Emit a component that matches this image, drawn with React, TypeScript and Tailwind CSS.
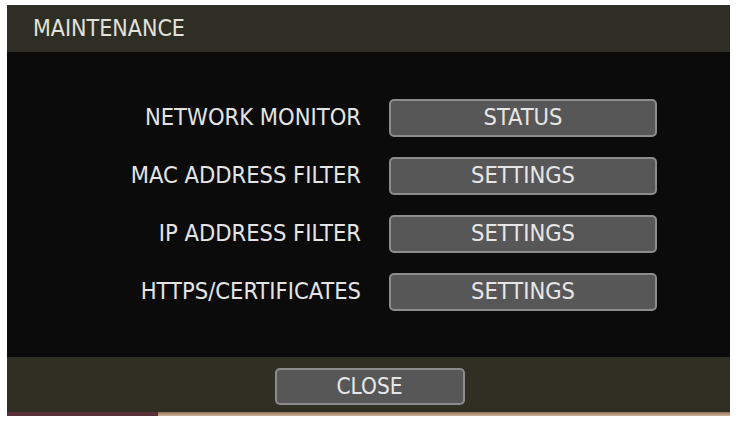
import React from 'react';

const rows = [
    { label: 'NETWORK MONITOR', action: 'STATUS' },
    { label: 'MAC ADDRESS FILTER', action: 'SETTINGS' },
    { label: 'IP ADDRESS FILTER', action: 'SETTINGS' },
    { label: 'HTTPS/CERTIFICATES', action: 'SETTINGS' },
];

const font = { fontFamily: '"DejaVu Sans Condensed", "DejaVu Sans", sans-serif' };

const DvrButton: React.FC<{ text: string; className?: string }> = ({ text, className = '' }) => (
    <button
        className={`flex items-center justify-center rounded-[5px] border-2 border-[#8c8c8c] bg-[#575757] text-[#e6e6e6] ${className}`}
    >
        {text}
    </button>
);

const App: React.FC = () => {
    return (
        <div className="h-[430px] w-[745px] bg-white pt-[5px] pl-[7px]" style={font}>
            <div className="flex w-[723px] flex-col">
                {/* Title bar */}
                <div className="flex h-[47px] items-center bg-[#2e2e25] pl-[26px] text-[23px] text-[#e2e2dc]">
                    MAINTENANCE
                </div>

                {/* Body */}
                <div className="flex h-[305px] flex-col justify-center gap-[20px] bg-[#0b0b0b]">
                    {rows.map((row) => (
                        <div key={row.label} className="grid grid-cols-[354px_268px] items-center gap-x-[28px]">
                            <span className="text-right text-[23.5px] text-[#e4e4e4]">{row.label}</span>
                            <DvrButton text={row.action} className="h-[38px] w-[268px] text-[23.5px]" />
                        </div>
                    ))}
                </div>

                {/* Footer */}
                <div className="flex h-[55px] items-center justify-center bg-[#2f2f23] pt-[4px]">
                    <DvrButton text="CLOSE" className="ml-[2px] h-[37px] w-[190px] text-[22.5px]" />
                </div>
                <div className="flex h-[4px]">
                    <div className="w-[151px] bg-[#5a3038]" />
                    <div className="flex-1 bg-gradient-to-b from-[#8c7058] to-[#d0b49a]" />
                </div>
            </div>
        </div>
    );
};

export default App;
